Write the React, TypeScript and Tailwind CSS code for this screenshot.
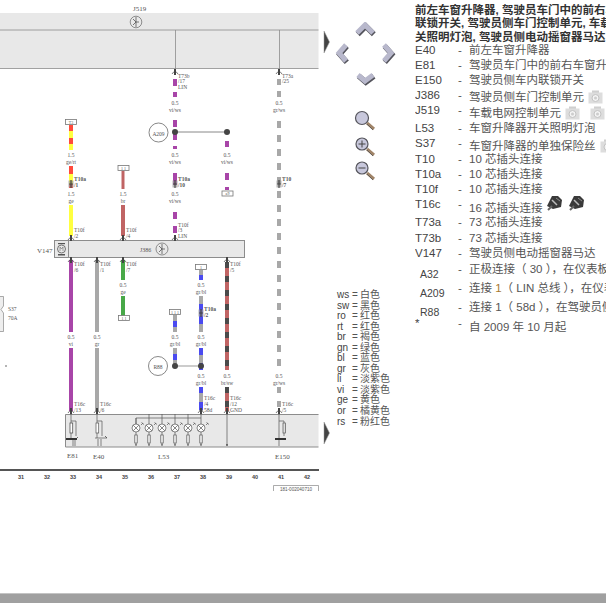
import type { ReactNode } from "react";

const PURPLE = "#a845a8";
const GREY = "#a8a8a8";
const BROWN = "#c06464";
const BLUE = "#4a4af0";
const INK = "#555";

type Stripe = { x: number; y1: number; y2: number; color: string; over?: string; dash?: string; width?: number };

// every wire run: base colour plus an optional dashed second colour on top
const wires: Stripe[] = [
  { x: 175, y1: 73, y2: 97, color: PURPLE, over: "#fff", dash: "6 7" },
  { x: 175, y1: 114, y2: 149, color: PURPLE, over: "#fff", dash: "6 7" },
  { x: 227, y1: 135, y2: 147, color: PURPLE, over: "#fff", dash: "6 7" },
  { x: 227, y1: 166, y2: 190, color: PURPLE, over: "#fff", dash: "7 7" },
  { x: 175, y1: 173, y2: 185, color: PURPLE },
  { x: 175, y1: 205, y2: 234, color: PURPLE, over: "#fff", dash: "7 7" },
  { x: 71, y1: 125, y2: 150, color: "#ffff40", over: "#ff4a3c", dash: "6 7" },
  { x: 71, y1: 166, y2: 188, color: "#ffff40", over: "#ff4a3c", dash: "8 10" },
  { x: 71, y1: 205, y2: 236, color: "#ffff40" },
  { x: 123, y1: 171, y2: 189, color: BROWN, width: 3 },
  { x: 123, y1: 205, y2: 236, color: BROWN },
  { x: 71, y1: 260, y2: 332, color: PURPLE },
  { x: 71, y1: 348, y2: 411, color: PURPLE },
  { x: 97, y1: 260, y2: 332, color: GREY },
  { x: 97, y1: 348, y2: 411, color: GREY },
  { x: 123, y1: 260, y2: 280, color: "#48a848" },
  { x: 123, y1: 296, y2: 316, color: "#48a848" },
  { x: 175, y1: 315, y2: 332, color: BLUE, over: GREY, dash: "6 6" },
  { x: 175, y1: 348, y2: 366, color: BLUE, over: GREY, dash: "6 6" },
  { x: 201, y1: 270, y2: 280, color: GREY, over: BLUE, dash: "0 5 6 9" },
  { x: 201, y1: 296, y2: 332, color: GREY, over: BLUE, dash: "0 8 20 20" },
  { x: 201, y1: 348, y2: 370, color: GREY, over: BLUE, dash: "0 0 7 8 8 20" },
  { x: 201, y1: 387, y2: 411, color: GREY, over: BLUE, dash: "6 9 8 30" },
  { x: 227, y1: 262, y2: 370, color: BROWN, over: "#4a4a4a", dash: "6 8" },
  { x: 227, y1: 387, y2: 411, color: BROWN, over: "#4a4a4a", dash: "6 8" },
  { x: 279, y1: 73, y2: 97, color: GREY, over: "#fff", dash: "6 6" },
  { x: 279, y1: 114, y2: 370, color: GREY, over: "#fff", dash: "7 7" },
  { x: 279, y1: 387, y2: 411, color: "#fff", over: GREY, dash: "6 8" },
];

function Wire({ x, y1, y2, color, over, dash, width = 4 }: Stripe) {
  return (
    <g strokeWidth={width}>
      <line x1={x} x2={x} y1={y1} y2={y2} stroke={color} />
      {over && <line x1={x} x2={x} y1={y1} y2={y2} stroke={over} strokeDasharray={dash} />}
    </g>
  );
}

function Txt({ x, y, size = 5.5, mid, bold, children }: { x: number; y: number; size?: number; mid?: boolean; bold?: boolean; children: ReactNode }) {
  return (
    <text x={x} y={y} fontSize={size} fill={INK} fontWeight={bold ? 700 : 400} textAnchor={mid ? "middle" : "start"} className="font-['Liberation_Serif',serif]">
      {children}
    </text>
  );
}

// gauge and colour pair, e.g. 0.5 / vi/ws
function Gauge({ x, y, size = "0.5", name }: { x: number; y: number; size?: string; name: string }) {
  return (
    <>
      <Txt x={x} y={y} mid>{size}</Txt>
      <Txt x={x} y={y + 7} mid>{name}</Txt>
    </>
  );
}

function Pin({ x, y }: { x: number; y: number }) {
  return (
    <g fill="none" stroke="#444">
      <line x1={x} x2={x} y1={y - 3} y2={y + 3} strokeWidth={2} />
      <path d={`M${x - 3} ${y + 2}Q${x} ${y - 3} ${x + 3} ${y + 2}`} strokeWidth={0.7} />
    </g>
  );
}

function Inline({ x, y }: { x: number; y: number }) {
  return (
    <g>
      <rect x={x - 2.5} y={y - 3.5} width={5} height={7} fill="#999" opacity={0.7} />
      <line x1={x} x2={x} y1={y - 4} y2={y + 4} stroke="#333" strokeWidth={1} />
      <line x1={x - 2} x2={x + 2} y1={y} y2={y} stroke="#333" strokeWidth={0.7} />
    </g>
  );
}

function Plug({ x, y, w = 11, t }: { x: number; y: number; w?: number; t: string }) {
  return (
    <g>
      <rect x={x} y={y} width={w} height={5} fill="#fff" stroke="#777" strokeWidth={0.8} />
      <Txt x={x + w / 2} y={y + 4} size={4} mid>{t}</Txt>
    </g>
  );
}

function Lamp({ x, feed }: { x: number; feed?: boolean }) {
  return (
    <g fill="none" stroke="#555" strokeWidth={0.7}>
      {feed && <line x1={x} x2={x} y1={414} y2={424} />}
      {!feed && <line x1={x} x2={x} y1={418} y2={424} />}
      <circle cx={x} cy={428} r={4} fill="#fff" />
      <path d={`M${x - 2.8} ${425.2}L${x + 2.8} ${430.8}M${x + 2.8} ${425.2}L${x - 2.8} ${430.8}`} />
      <path d={`M${x + 5} 425L${x + 7} 423M${x + 5.5} 422.5L${x + 8} 424.5`} />
      <line x1={x} x2={x} y1={432} y2={445} />
      <rect x={x - 1.2} y={435} width={2.4} height={8} fill="#f4f4f4" />
      <circle cx={x} cy={445} r={0.8} fill="#444" stroke="none" />
    </g>
  );
}

function Circuit() {
  const columns = [31, 32, 33, 34, 35, 36, 37, 38, 39, 40, 41, 42];
  return (
    <svg width={322} height={593} viewBox="0 0 322 593" className="shrink-0 block">
      <rect x={0} y={13} width={318.5} height={55.5} fill="#e8e8e8" />
      <g stroke="#8c8c8c" strokeWidth={0.8}>
        <line x1={0} x2={318.5} y1={30} y2={30} />
        <line x1={0} x2={318.5} y1={68.5} y2={68.5} />
        <line x1={175.5} x2={175.5} y1={30} y2={69} />
        <line x1={279.5} x2={279.5} y1={30} y2={69} />
      </g>
      <Txt x={133} y={11} size={7}>J519</Txt>
      <circle cx={136} cy={22} r={5.8} fill="none" stroke="#666" strokeWidth={0.7} />
      <path d="M136 17v10M136 22l-3-3M136 22l-3 3M136 22h3" stroke="#444" strokeWidth={0.7} fill="none" />

      {wires.map((w, i) => <Wire key={i} {...w} />)}

      <Pin x={175} y={72} />
      <Pin x={279} y={72} />
      <Txt x={178} y={78}>T73b</Txt>
      <Txt x={178} y={83}>/17</Txt>
      <Txt x={178} y={89}>LIN</Txt>
      <Txt x={282} y={78}>T73a</Txt>
      <Txt x={282} y={83}>/25</Txt>
      <Gauge x={175} y={105} name="vi/ws" />
      <Gauge x={279} y={105} name="gr/ws" />

      <line x1={175} x2={227} y1={132} y2={132} stroke="#888" strokeWidth={1} />
      <circle cx={175} cy={132} r={3} fill="#444" />
      <circle cx={227} cy={132} r={3} fill="#444" />
      <circle cx={158.5} cy={132.5} r={9.5} fill="#fff" stroke="#555" strokeWidth={0.7} />
      <Txt x={158.5} y={136} mid>A209</Txt>

      <Gauge x={175} y={157} name="vi/ws" />
      <Gauge x={227} y={157} name="vi/ws" />
      <Gauge x={71} y={157} size="1.5" name="ge/rt" />
      <Plug x={65.5} y={119.5} t="T3" />
      <Plug x={118} y={165.5} t="1 1" />
      <Plug x={222} y={191} t="a9" />

      <Inline x={71} y={184} />
      <Inline x={175} y={184} />
      <Inline x={279} y={184} />
      <Txt x={74} y={181} bold>T10a</Txt>
      <Txt x={74} y={187} bold>/1</Txt>
      <Txt x={178} y={181} bold>T10a</Txt>
      <Txt x={178} y={187} bold>/10</Txt>
      <Txt x={282} y={181} bold>T10</Txt>
      <Txt x={282} y={187} bold>/7</Txt>

      <Gauge x={71} y={196} size="1.5" name="ge" />
      <Gauge x={123} y={196} size="1.5" name="br" />
      <Gauge x={175} y={196} name="vi/ws" />

      <rect x={54.5} y={240.5} width={190} height={17} fill="#e8e8e8" stroke="#8c8c8c" />
      <line x1={68.5} x2={68.5} y1={241} y2={257} stroke="#8c8c8c" />
      <circle cx={61.5} cy={249} r={4} fill="none" stroke="#555" strokeWidth={0.8} />
      <path d="M60 247v4M63 247v4M60 247l1.5 2 1.5-2" fill="none" stroke="#555" strokeWidth={0.5} />
      <rect x={58} y={243} width={7} height={1.2} fill="#555" />
      <rect x={58} y={254} width={7} height={1.5} fill="#555" />
      <Txt x={37} y={253} size={7}>V147</Txt>
      <Txt x={140} y={252} size={6}>J386</Txt>
      <circle cx={162} cy={249} r={6} fill="none" stroke="#666" strokeWidth={0.7} />
      <path d="M162 244v10M162 249l-3-3M162 249l-3 3M162 249h3" stroke="#444" strokeWidth={0.7} fill="none" />

      {[71, 123, 175].map((x) => <Pin key={x} x={x} y={238} />)}
      {[71, 97, 123, 227].map((x) => <Pin key={x} x={x} y={260} />)}
      <Txt x={74} y={232}>T10f</Txt>
      <Txt x={74} y={238}>/2</Txt>
      <Txt x={126} y={232}>T10f</Txt>
      <Txt x={126} y={238}>/4</Txt>
      <Txt x={178} y={227}>T10f</Txt>
      <Txt x={178} y={232}>/3</Txt>
      <Txt x={178} y={238}>LIN</Txt>
      <Txt x={74} y={266}>T10f</Txt>
      <Txt x={74} y={272}>/6</Txt>
      <Txt x={100} y={266}>T10f</Txt>
      <Txt x={100} y={272}>/1</Txt>
      <Txt x={126} y={266}>T10f</Txt>
      <Txt x={126} y={272}>/7</Txt>
      <Txt x={230} y={266}>T10f</Txt>
      <Txt x={230} y={272}>/5</Txt>

      <Gauge x={123} y={287} name="ge" />
      <Gauge x={201} y={287} name="gr/bl" />
      <Plug x={118.5} y={315.5} t="1 1" />
      <Plug x={195.5} y={264.5} t="1" />
      <Plug x={169.5} y={309.5} t="1 1 1" />
      <Inline x={201} y={313} />
      <Txt x={204} y={311} bold>T10a</Txt>
      <Txt x={204} y={317} bold>/2</Txt>

      <path d="M0 296.500H3.500V306L1 309.500L3.500 313V331.500H0" fill="#eee" stroke="#888" strokeWidth={0.7} />
      <Txt x={8} y={311}>S37</Txt>
      <Txt x={8} y={320}>70A</Txt>
      <circle cx={6} cy={366} r={0.8} fill="#555" />

      <Gauge x={71} y={339} name="vi" />
      <Gauge x={97} y={339} name="gr" />
      <Gauge x={175} y={339} name="gr/bl" />
      <Gauge x={201} y={339} name="gr/bl" />

      <line x1={175} x2={201} y1={366} y2={366} stroke="#999" strokeWidth={1} />
      <circle cx={175} cy={366} r={3} fill="#444" />
      <circle cx={201} cy={366} r={3} fill="#444" />
      <circle cx={158} cy={366} r={9.5} fill="#fff" stroke="#555" strokeWidth={0.7} />
      <Txt x={158} y={369} mid>R88</Txt>

      <Gauge x={201} y={378} name="gr/bl" />
      <Gauge x={227} y={378} name="br/sw" />
      <Gauge x={279} y={378} name="gr/ws" />

      <Txt x={74} y={406}>T16c</Txt>
      <Txt x={74} y={412}>/13</Txt>
      <Txt x={100} y={406}>T16c</Txt>
      <Txt x={100} y={412}>/6</Txt>
      <Txt x={204} y={400}>T16c</Txt>
      <Txt x={204} y={406}>/4</Txt>
      <Txt x={204} y={412}>58d</Txt>
      <Txt x={230} y={400}>T16c</Txt>
      <Txt x={230} y={406}>/12</Txt>
      <Txt x={230} y={412}>GND</Txt>
      <Txt x={282} y={406}>T16c</Txt>
      <Txt x={282} y={412}>/5</Txt>

      <rect x={65} y={414} width={253.500} height={33} fill="#e8e8e8" />
      <path d="M318.500 414.500H65.500V447H318.500" fill="none" stroke="#8c8c8c" />
      {[71, 97, 201, 227, 279].map((x) => <Pin key={x} x={x} y={411} />)}

      <g fill="none" stroke="#555" strokeWidth={0.7}>
        <path d="M71 414V440M71 421H76V436" />
        <rect x={70} y={423} width={2.7} height={10} fill="#fff" strokeWidth={0.8} />
        <path d="M73 440V446M75 440V446" />
        <path d="M97 414V438M97 421H102V436" />
        <rect x={96} y={423} width={2.7} height={10} fill="#fff" />
        <path d="M98 439V446M101 439V446M95 438H107" />
        <path d="M279 414V446M279 421H284V436" />
        <rect x={283} y={423} width={2.4} height={10} fill="#ddd" />
        <path d="M227 414V445" />
        <path d="M136 424V418H201" />
      </g>
      <rect x={66} y={438} width={11} height={2} fill="#333" />
      <rect x={275} y={438} width={11} height={2} fill="#333" />
      <path d="M76 439l2-2M107 438l-2-2" stroke="#333" strokeWidth={0.7} />
      <circle cx={227} cy={445} r={0.9} fill="#444" />
      <Lamp x={136} />
      <Lamp x={149} feed />
      <Lamp x={162} feed />
      <Lamp x={175} feed />
      <Lamp x={188} feed />
      <Lamp x={201} feed />

      <Txt x={67} y={458} size={7}>E81</Txt>
      <Txt x={93} y={459} size={7}>E40</Txt>
      <Txt x={158} y={459} size={7}>L53</Txt>
      <Txt x={275} y={459} size={7}>E150</Txt>

      <rect x={0} y={469} width={319} height={2} fill="#555" />
      {columns.map((n, i) => (
        <text key={n} x={21 + i * 26} y={479} fontSize={5.5} fontWeight={700} fill="#444" textAnchor="middle" className="font-['Liberation_Sans',sans-serif]">
          {n}
        </text>
      ))}
      <path d="M273.500 491V485.500H318.500V491" fill="none" stroke="#888" strokeWidth={0.7} />
      <text x={296} y={490.500} fontSize={4.6} fill="#555" textAnchor="middle" className="font-['Liberation_Sans',sans-serif]">181-002040710</text>
    </svg>
  );
}

function Chevron({ d }: { d: string }) {
  return (
    <g>
      <path d={d} fill="none" stroke="#54545c" strokeWidth={5.5} transform="translate(0.8 1.2)" />
      <path d={d} fill="none" stroke="#b8b8cc" strokeWidth={5} />
    </g>
  );
}

function Lens({ cx, cy, sign }: { cx: number; cy: number; sign?: "+" | "-" }) {
  return (
    <g>
      <line x1={cx + 5} y1={cy + 5} x2={cx + 12} y2={cy + 11} stroke="#a08468" strokeWidth={3} />
      <line x1={cx + 5} y1={cy + 6} x2={cx + 11} y2={cy + 12} stroke="#555" strokeWidth={0.8} />
      <circle cx={cx} cy={cy} r={sign ? 6 : 6.5} fill="#c8c8dc" stroke="#55555c" strokeWidth={1.2} />
      {sign && <line x1={cx - 3.5} x2={cx + 3.5} y1={cy} y2={cy} stroke="#444" strokeWidth={1} />}
      {sign === "+" && <line x1={cx} x2={cx} y1={cy - 3.5} y2={cy + 3.5} stroke="#444" strokeWidth={1} />}
    </g>
  );
}

function Pointer() {
  return (
    <svg width={7} height={24} viewBox="0 0 7 24" className="block shrink-0">
      <path d="M1 1L6.500 12L1 23Z" fill="#444" stroke="#999" strokeWidth={0.5} />
    </svg>
  );
}

function NavControls() {
  return (
    <svg width={82} height={170} viewBox="0 0 82 170" className="block">
      <Chevron d="M26 11L34 3L42 11" />
      <Chevron d="M15 23L8 31L15 39" />
      <Chevron d="M53 23L60 31L53 39" />
      <Chevron d="M27 53L34 59L42 53" />
      <Lens cx={31} cy={96} />
      <Lens cx={31} cy={122} sign="+" />
      <Lens cx={31} cy={146} sign="-" />
    </svg>
  );
}

const colours = [
  ["ws", "白色"],
  ["sw", "黑色"],
  ["ro", "红色"],
  ["rt", "红色"],
  ["br", "褐色"],
  ["gn", "绿色"],
  ["bl", "蓝色"],
  ["gr", "灰色"],
  ["li", "淡紫色"],
  ["vi", "淡紫色"],
  ["ge", "黄色"],
  ["or", "橘黄色"],
  ["rs", "粉红色"],
];

function Camera() {
  return (
    <svg width={15} height={14} viewBox="0 0 15 14" className="shrink-0 opacity-70">
      <rect x={4} y={0.5} width={7} height={3} fill="#bcbcbc" />
      <rect x={0.5} y={2.500} width={14} height={11} fill="#d0d0d0" />
      <circle cx={7.500} cy={8} r={3.500} fill="#f0f0f0" stroke="#aaa" />
      <circle cx={7.500} cy={8} r={1.5} fill="#b8b8b8" />
    </svg>
  );
}

function PlugIcon() {
  return (
    <svg width={15} height={15} viewBox="0 0 15 15" className="shrink-0">
      <path d="M5 0L11 0L15 4L14 11L6 13L0 10Z" fill="#3a3a3a" />
      <path d="M5 4L10 9" stroke="#bbb" strokeWidth={1.500} />
      <path d="M1 14L5 10" stroke="#666" strokeWidth={2} />
      <path d="M9 2L13 5" stroke="#8a8a8a" strokeWidth={1} />
    </svg>
  );
}

type Row = { id: string; text: ReactNode; h: string; extra?: ReactNode; small?: boolean; shift?: string };

const rows: Row[] = [
  { id: "E40", text: "前左车窗升降器", h: "h-[15px]" },
  { id: "E81", text: "驾驶员车门中的前右车窗升", h: "h-[15px]" },
  { id: "E150", text: "驾驶员侧车内联锁开关", h: "h-[15px]" },
  { id: "J386", text: "驾驶员侧车门控制单元", h: "h-[15px]", shift: "mt-[2px]", extra: <span className="ml-[4px] flex"><Camera /></span> },
  { id: "J519", text: "车载电网控制单元", h: "h-[18px]", shift: "mt-[3.5px]", extra: <span className="ml-[4px] flex gap-[10px]"><Camera /><Camera /></span> },
  { id: "L53", text: "车窗升降器开关照明灯泡", h: "h-[15px]" },
  { id: "S37", text: "车窗升降器的单独保险丝", h: "h-[16px]", shift: "mt-[3px]", extra: <span className="ml-[4px] flex"><Camera /></span> },
  { id: "T10", text: "10 芯插头连接", h: "h-[15px]" },
  { id: "T10a", text: "10 芯插头连接", h: "h-[15px]" },
  { id: "T10f", text: "10 芯插头连接", h: "h-[15px]" },
  { id: "T16c", text: "16 芯插头连接", h: "h-[18px]", shift: "mt-[4px]", extra: <span className="ml-[4px] -mt-[5px] flex gap-[7px]"><PlugIcon /><PlugIcon /></span> },
  { id: "T73a", text: "73 芯插头连接", h: "h-[16px]" },
  { id: "T73b", text: "73 芯插头连接", h: "h-[15px]" },
  { id: "V147", text: "驾驶员侧电动摇窗器马达", h: "h-[16px]" },
  { id: "A32", text: "正极连接（ 30 ），在仪表板", h: "h-[19px]", small: true },
  { id: "A209", text: <span>连接 <span className="text-[#a87830]">1</span>（ LIN 总线 ），在仪表</span>, h: "h-[19px]", small: true },
  { id: "R88", text: "连接 1（ 58d ），在驾驶员侧", h: "h-[16px]", small: true },
  { id: "*", text: "自 2009 年 10 月起", h: "h-[16px]", shift: "mt-[4px]" },
];

function Legend() {
  return (
    <div className="w-full overflow-hidden">
      <div className="whitespace-nowrap font-bold leading-[13.7px] text-[#333]">
        <div>前左车窗升降器, 驾驶员车门中的前右车</div>
        <div>联锁开关, 驾驶员侧车门控制单元, 车载</div>
        <div>关照明灯泡, 驾驶员侧电动摇窗器马达</div>
      </div>
      <div className="-mt-[2px] text-[#555]">
        {rows.map((r) => (
          <div key={r.id} className={`flex items-start whitespace-nowrap leading-[15px] ${r.h}`}>
            <span className={r.small ? "w-[43px] shrink-0 pl-[5px] pt-[5px] text-[10.5px] text-[#444]" : "w-[43px] shrink-0 text-[#444]"}>{r.id}</span>
            <span className="w-[11px] shrink-0">-</span>
            <span className={`flex items-start ${r.shift ?? ""}`}>
              {r.text}
              {r.extra}
            </span>
          </div>
        ))}
      </div>
    </div>
  );
}

export default function App() {
  return (
    <div className="flex h-[603px] w-[606px] flex-col overflow-hidden bg-white font-['Liberation_Sans','Noto_Sans_CJK_SC',sans-serif] text-[11.5px]">
      <div className="flex h-[593px] shrink-0">
        <Circuit />
        <div className="flex w-[93px] shrink-0 flex-col pl-[1px]">
          <div className="flex h-[290px] shrink-0 pt-[22px]">
            <div className="mt-[8px]"><Pointer /></div>
            <div className="ml-[1px]"><NavControls /></div>
          </div>
          <div className="flex">
            <div className="mt-[131px]"><Pointer /></div>
            <div className="ml-[7px] text-[10px] leading-[10.55px] text-[#555]">
              {colours.map(([k, v]) => (
                <div key={k} className="flex whitespace-nowrap">
                  <span className="w-[15px] shrink-0 text-[#444]">{k}</span>
                  <span className="w-[8px] shrink-0">=</span>
                  <span>{v}</span>
                </div>
              ))}
            </div>
          </div>
        </div>
        <div className="min-w-0 flex-1 pt-[3.5px]">
          <Legend />
        </div>
      </div>
      <div className="flex-1 border-t border-[#c4c4c4] bg-[#a0a0a0]" />
    </div>
  );
}
